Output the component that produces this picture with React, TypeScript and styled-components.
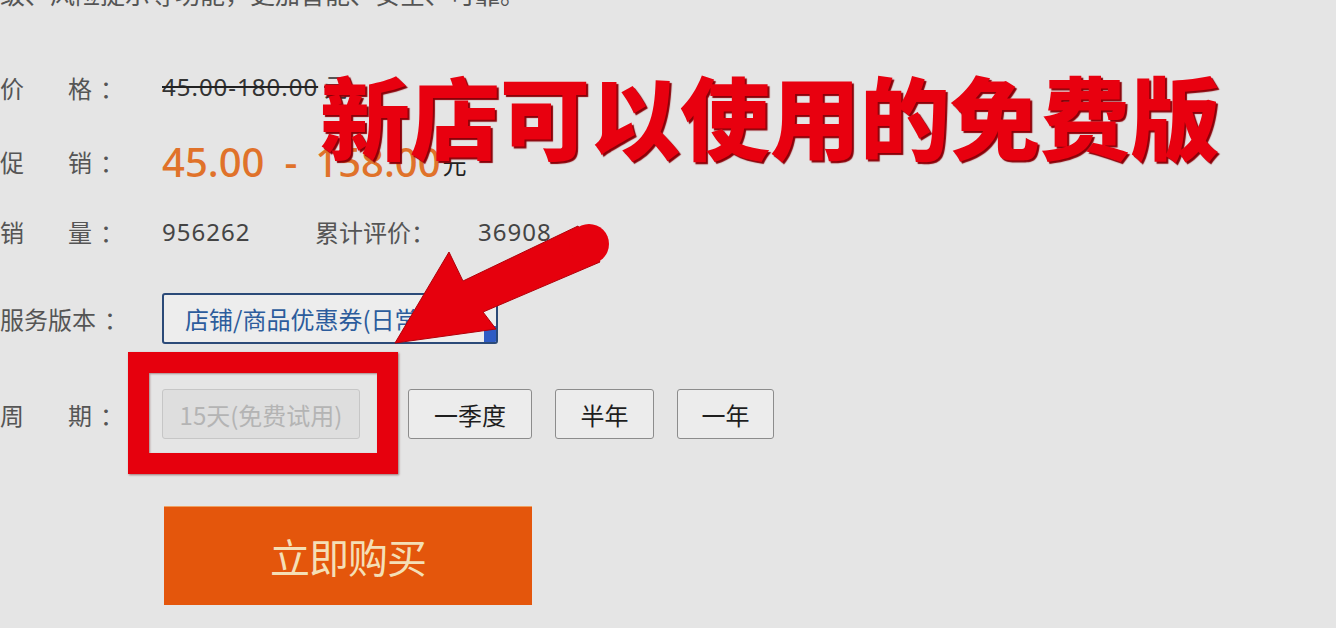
import { FC } from "react";
import styled, { createGlobalStyle } from "styled-components";

const GlobalStyle = createGlobalStyle`
  html, body {
    margin: 0;
    padding: 0;
    background: #e5e5e5;
  }
  body {
    font-family: "Noto Sans CJK SC", "Noto Sans", sans-serif;
  }
`;

const Page = styled.div`
  position: relative;
  width: 1336px;
  height: 628px;
  overflow: hidden;
  background: #e5e5e5;
  color: #555;
`;

const Intro = styled.div`
  margin-top: -22px;
  font-size: 25px;
  line-height: 30px;
  color: #555;
  white-space: nowrap;
`;

const Row = styled.div<{ $top: number; $h: number }>`
  display: flex;
  align-items: center;
  margin-top: ${(p) => p.$top}px;
  height: ${(p) => p.$h}px;
  font-size: 24px;
  color: #555;
`;

const Label = styled.div`
  display: flex;
  justify-content: space-between;
  width: 124px;
  margin-right: 38px;
  color: #555;
  white-space: nowrap;
`;

const Colon = styled.span`
  margin-left: 8px;
`;

const OldPrice = styled.span`
  font-family: "Noto Sans", sans-serif;
  color: #333;
  letter-spacing: 1px;
  text-decoration: line-through;
  text-decoration-thickness: 2px;
  text-decoration-color: #222;
`;

const OldUnit = styled.span`
  margin-left: 6px;
`;

const Promo = styled.span`
  font-family: "Noto Sans", sans-serif;
  font-weight: 500;
  font-size: 40px;
  color: #e0722a;
`;

const Dash = styled.span`
  margin: 0 18px 0 20px;
`;

const Unit = styled.span`
  color: #222;
  font-size: 24px;
  align-self: flex-end;
  margin: 0 0 6px 2px;
`;

const Digits = styled.span<{ $w?: number }>`
  font-family: "Noto Sans", sans-serif;
  color: #444;
  letter-spacing: 1px;
  width: ${(p) => (p.$w ? `${p.$w}px` : "auto")};
`;

const Select = styled.div`
  position: relative;
  box-sizing: border-box;
  width: 336px;
  height: 51px;
  border: 2px solid #2b4a78;
  border-radius: 3px;
  background: #ededed;
  padding-left: 21px;
  display: flex;
  align-items: center;
  color: #2c5c9c;
  overflow: hidden;
  white-space: nowrap;
`;

const Caret = styled.span`
  position: absolute;
  right: 0;
  bottom: 0;
  width: 12px;
  height: 16px;
  background: #2f5cc4;
`;

const Periods = styled.div`
  display: flex;
  gap: 23px;
`;

const PeriodBtn = styled.button<{ $w: number; $off?: boolean; $extra?: number }>`
  box-sizing: border-box;
  width: ${(p) => p.$w}px;
  height: 50px;
  margin-right: ${(p) => p.$extra ?? 0}px;
  border: 1px solid ${(p) => (p.$off ? "#c6c6c6" : "#8c8c8c")};
  border-radius: 3px;
  background: ${(p) => (p.$off ? "#dedede" : "#ececec")};
  color: ${(p) => (p.$off ? "#b4b4b4" : "#1e1e1e")};
  font-family: "Noto Sans CJK SC", sans-serif;
  font-size: 24px;
  padding: 0;
`;

const BuyBtn = styled.button`
  display: block;
  margin: 67px 0 0 164px;
  width: 368px;
  height: 99px;
  border: none;
  border-top: 1px solid #f0a060;
  background: #e4560c;
  color: #f4dfb6;
  font-family: "Noto Sans CJK SC", sans-serif;
  font-size: 40px;
  letter-spacing: -1px;
`;

const Headline = styled.div`
  position: absolute;
  left: 320px;
  top: 65px;
  font-family: "Noto Sans CJK SC", sans-serif;
  font-weight: 900;
  font-size: 90px;
  line-height: 1.1;
  color: #e8000f;
  text-shadow: 2px 2px 1px #8a0008;
  white-space: nowrap;
`;

const Frame = styled.div`
  position: absolute;
  left: 128px;
  top: 352px;
  width: 228px;
  height: 80px;
  border: 21px solid #e6000d;
  box-shadow: 1px 1px 2px rgba(80, 0, 0, 0.5), inset 1px 1px 2px rgba(80, 0, 0, 0.4);
`;

const Arrow = styled.svg`
  position: absolute;
  left: 0;
  top: 0;
  pointer-events: none;
`;

const App: FC = () => {
  return (
    <Page>
      <GlobalStyle />
      <Intro>级、风险提示等功能，更加智能、安全、可靠。</Intro>

      <Row $top={59} $h={40}>
        <Label>
          <span>价</span>
          <span>
            格<Colon>：</Colon>
          </span>
        </Label>
        <OldPrice>
          45.00-180.00<OldUnit>元</OldUnit>
        </OldPrice>
      </Row>

      <Row $top={28} $h={52}>
        <Label>
          <span>促</span>
          <span>
            销<Colon>：</Colon>
          </span>
        </Label>
        <Promo>
          45.00<Dash>-</Dash>158.00
        </Promo>
        <Unit>元</Unit>
      </Row>

      <Row $top={24} $h={40}>
        <Label>
          <span>销</span>
          <span>
            量<Colon>：</Colon>
          </span>
        </Label>
        <Digits $w={153}>956262</Digits>
        <span style={{ width: 163 }}>累计评价：</span>
        <Digits>36908</Digits>
      </Row>

      <Row $top={42} $h={51}>
        <Label>
          <span>
            服务版本<Colon>：</Colon>
          </span>
        </Label>
        <Select>
          店铺/商品优惠券(日常版)
          <Caret />
        </Select>
      </Row>

      <Row $top={45} $h={50}>
        <Label>
          <span>周</span>
          <span>
            期<Colon>：</Colon>
          </span>
        </Label>
        <Periods>
          <PeriodBtn $w={198} $off $extra={25}>
            15天(免费试用)
          </PeriodBtn>
          <PeriodBtn $w={124}>一季度</PeriodBtn>
          <PeriodBtn $w={99}>半年</PeriodBtn>
          <PeriodBtn $w={97}>一年</PeriodBtn>
        </Periods>
      </Row>

      <BuyBtn>立即购买</BuyBtn>

      <Headline>新店可以使用的免费版</Headline>
      <Frame />
      <Arrow width="1336" height="628" viewBox="0 0 1336 628">
        <path
          d="M578 226 L463 281 L449 252 L395 343 L496 329 L483 312 L600 262 Z"
          fill="#e6000d"
          stroke="#b0000a"
          strokeWidth="1"
          strokeLinejoin="round"
        />
        <circle cx="589" cy="244" r="20" fill="#e6000d" />
      </Arrow>
    </Page>
  );
};

export default App;
